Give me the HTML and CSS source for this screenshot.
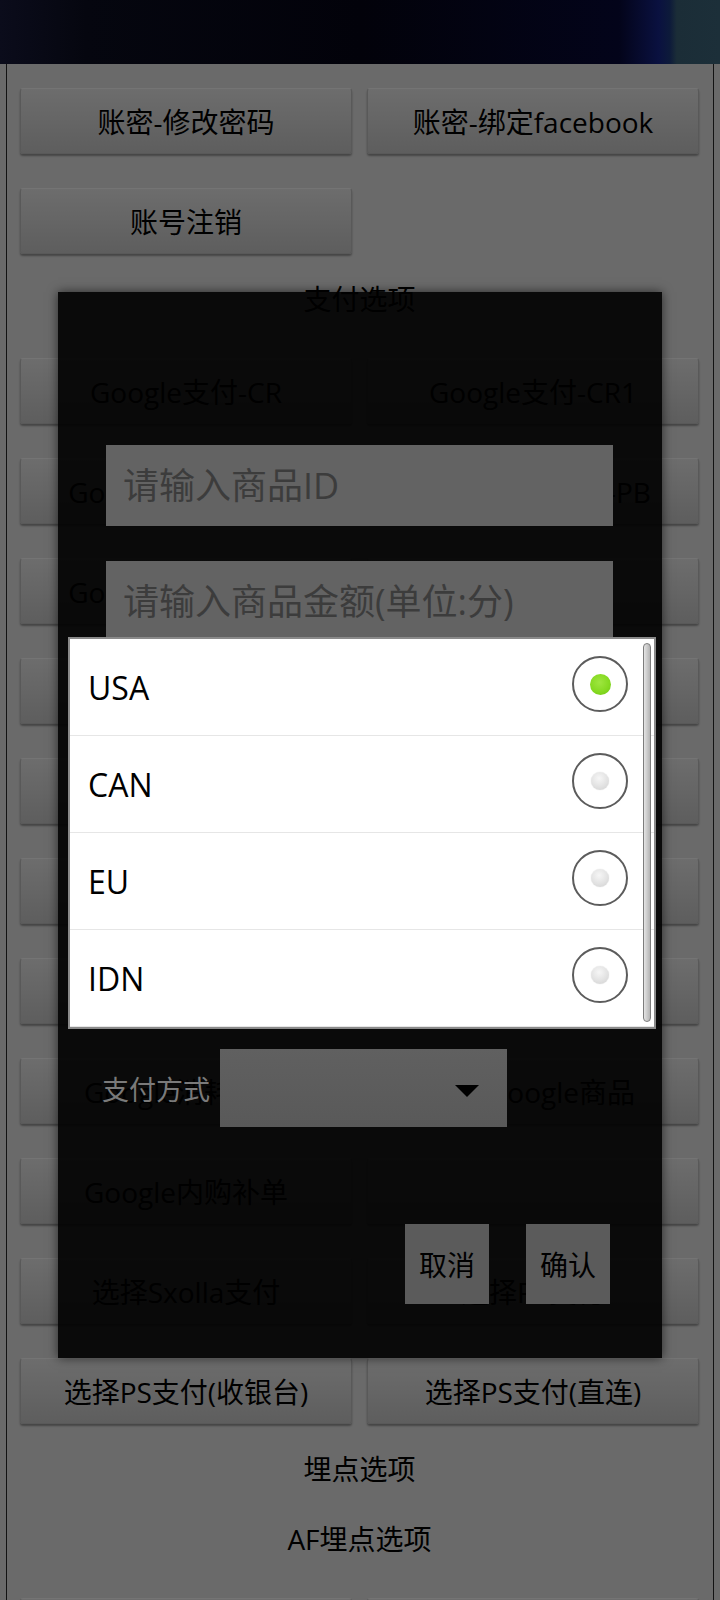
FILE: index.html
```html
<!DOCTYPE html>
<html lang="zh-CN">
<head>
<meta charset="utf-8">
<title>SDK Demo</title>
<link rel="stylesheet" href="styles.css">
</head>
<body>
<div class="statusbar"></div>
<main class="page">
  <div class="row"><button class="btn">账密-修改密码</button><button class="btn">账密-绑定facebook</button></div>
  <div class="row"><button class="btn">账号注销</button></div>
  <div class="section">支付选项</div>
  <div class="row"><button class="btn">Google支付-CR</button><button class="btn">Google支付-CR1</button></div>
  <div class="row"><button class="btn">Google支付-CR-PA</button><button class="btn">Google支付-CR-PB</button></div>
  <div class="row"><button class="btn">Google订阅-CR-PA</button><button class="btn"></button></div>
  <div class="row"><button class="btn"></button><button class="btn"></button></div>
  <div class="row"><button class="btn"></button><button class="btn"></button></div>
  <div class="row"><button class="btn"></button><button class="btn"></button></div>
  <div class="row"><button class="btn"></button><button class="btn"></button></div>
  <div class="row"><button class="btn">Google消耗商品</button><button class="btn">查询Google商品</button></div>
  <div class="row"><button class="btn">Google内购补单</button><button class="btn"></button></div>
  <div class="row"><button class="btn">选择Sxolla支付</button><button class="btn">选择PS支付</button></div>
  <div class="row"><button class="btn">选择PS支付(收银台)</button><button class="btn">选择PS支付(直连)</button></div>
  <div class="section">埋点选项</div>
  <div class="section">AF埋点选项</div>
  <div class="row"><button class="btn"></button><button class="btn"></button></div>
</main>
<div class="scrim"></div>
<div class="dialog">
  <input class="field" type="text" placeholder="请输入商品ID">
  <input class="field" type="text" placeholder="请输入商品金额(单位:分)">
  <div class="pay-row">
    <span class="pay-label">支付方式</span>
    <div class="spinner"><span class="caret"></span></div>
  </div>
  <div class="actions">
    <button class="act">取消</button>
    <button class="act">确认</button>
  </div>
  <div class="popup">
    <div class="opt"><span>USA</span><span class="radio"><span class="dot on"></span></span></div>
    <div class="opt"><span>CAN</span><span class="radio"><span class="dot"></span></span></div>
    <div class="opt"><span>EU</span><span class="radio"><span class="dot"></span></span></div>
    <div class="opt"><span>IDN</span><span class="radio"><span class="dot"></span></span></div>
    <div class="scrollbar"></div>
  </div>
</div>
</body>
</html>
```

FILE: styles.css
```css
* { box-sizing: border-box; }
html, body { margin: 0; padding: 0; }
body {
  width: 720px;
  height: 1600px;
  overflow: hidden;
  position: relative;
  background: #d5d5d5;
  font-family: "Open Sans", "Noto Sans CJK SC", sans-serif;
}

.statusbar {
  position: relative;
  z-index: 3;
  height: 64px;
  background: linear-gradient(90deg, #0b0c1b 0%, #05060f 12%, #02020a 50%, #03041a 86%, #0a1140 91.5%, #0d1a3a 93%, #1b2d37 94%, #1c2f39 100%);
}

.page {
  margin: 0 6px;
  height: 1536px;
  border-left: 1px solid #262626;
  border-right: 1px solid #262626;
  padding: 24px 14px 0 13px;
  display: flex;
  flex-direction: column;
}

.row {
  flex: none;
  display: grid;
  grid-template-columns: 332px 332px;
  column-gap: 15px;
  height: 66px;
  margin-top: 34px;
}
.row:first-child { margin-top: 0; }

.section {
  flex: none;
  height: 70px;
  margin-top: 10px;
  padding-bottom: 2px;
  display: flex;
  align-items: center;
  justify-content: center;
  font-size: 28px;
  color: #000;
}
.section + .row { margin-top: 24px; }
.section + .section { margin-top: 0; }

.btn {
  height: 66px;
  padding: 0;
  font-family: inherit;
  font-size: 28px;
  color: #000;
  background: linear-gradient(#dadada, #bcbcbc);
  border: 1px solid #b2b2b2;
  border-top-color: #e8e8e8;
  border-radius: 3px;
  box-shadow: 0 2px 2px rgba(0, 0, 0, 0.35);
  white-space: nowrap;
}

.scrim {
  position: absolute;
  left: 0;
  right: 0;
  top: 64px;
  bottom: 0;
  background: rgba(0, 0, 0, 0.5);
  z-index: 1;
}

.dialog {
  position: absolute;
  z-index: 2;
  left: 58px;
  top: 292px;
  width: 604px;
  height: 1066px;
  background: rgba(0, 0, 0, 0.9);
  box-shadow: 0 0 10px rgba(0, 0, 0, 0.6);
  padding: 153px 49px 0 48px;
  display: flex;
  flex-direction: column;
}

.field {
  flex: none;
  width: 100%;
  height: 81px;
  margin: 0 0 35px;
  padding: 0 0 0 17px;
  border: none;
  outline: none;
  background: #636363;
  font-family: inherit;
  font-size: 36px;
  color: #222;
}
.field::placeholder { color: #3c3c3c; }

.pay-row {
  flex: none;
  display: flex;
  align-items: center;
  height: 78px;
  margin: 372px 0 0 -4px;
}
.pay-label {
  width: 118px;
  font-size: 27px;
  color: #7a7a7a;
}
.spinner {
  width: 287px;
  height: 78px;
  background: linear-gradient(#606060, #595959);
  display: flex;
  align-items: center;
  justify-content: flex-end;
  padding-right: 28px;
}
.caret {
  width: 0;
  height: 0;
  margin-top: 6px;
  border-left: 12px solid transparent;
  border-right: 12px solid transparent;
  border-top: 12px solid #000;
}

.actions {
  flex: none;
  display: flex;
  justify-content: flex-end;
  gap: 37px;
  margin: 97px 3px 0 0;
}
.act {
  width: 84px;
  height: 80px;
  padding: 0;
  border: none;
  background: #5b5b5b;
  font-family: inherit;
  font-size: 28px;
  color: #000;
}

.popup {
  position: absolute;
  left: 10px;
  top: 345px;
  width: 588px;
  background: #fff;
  border: 2px solid #8a8a8a;
}
.opt {
  height: 97px;
  display: flex;
  align-items: center;
  justify-content: space-between;
  padding: 0 26px 0 18px;
  border-bottom: 1px solid #e6e6e6;
  font-size: 32px;
  color: #000;
}
.opt:last-of-type { border-bottom: none; height: 96px; }
.radio {
  width: 56px;
  height: 56px;
  margin-top: -6px;
  border-radius: 50%;
  border: 2px solid #5c5c5c;
  background: #fff;
  display: flex;
  align-items: center;
  justify-content: center;
}
.dot {
  width: 18px;
  height: 18px;
  border-radius: 50%;
  background: radial-gradient(circle at 45% 35%, #f6f6f6 0%, #e2e2e2 55%, #cfcfcf 100%);
  box-shadow: 0 0 1px rgba(0, 0, 0, 0.2);
}
.dot.on {
  width: 21px;
  height: 21px;
  background: radial-gradient(circle at 45% 40%, #9fe640 0%, #86da22 55%, #6cc412 100%);
  box-shadow: none;
}
.scrollbar {
  position: absolute;
  right: 3px;
  top: 4px;
  bottom: 5px;
  width: 8px;
  border-radius: 4px;
  border: 1px solid #7c7c7c;
  background: linear-gradient(90deg, #e4e4e4, #b4b4b4);
}
```
